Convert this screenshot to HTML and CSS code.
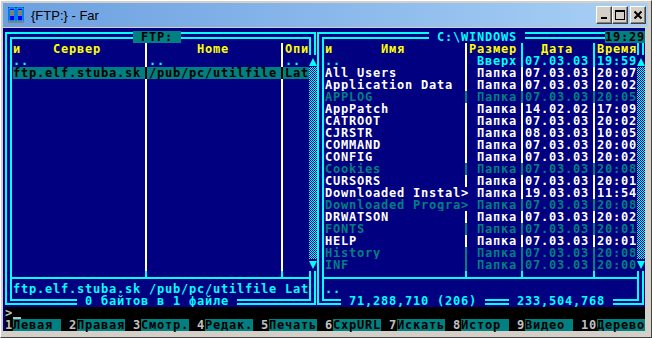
FILE: index.html
```html
<!DOCTYPE html>
<html lang="ru">
<head>
    <meta charset="UTF-8">
    <title>{FTP:} - Far</title>
    <link rel="stylesheet" href="styles.css">
</head>
<body>
<div class="window">
    <div class="titlebar">
        <svg class="app-icon" width="16" height="16" viewBox="0 0 16 16">
            <rect x="0" y="0" width="16" height="16" fill="#0000a8"/>
            <rect x="1" y="1" width="6" height="13" fill="#0000ff" stroke="#00ffff" stroke-width="1"/>
            <rect x="9" y="1" width="6" height="13" fill="#0000ff" stroke="#00ffff" stroke-width="1"/>
            <path d="M2 4h4M2 6h4M2 8h4M10 4h4M10 6h4M10 8h4" stroke="#ffff00" stroke-width="1"/>
            <rect x="0" y="14" width="16" height="2" fill="#808080"/>
        </svg>
        <span class="title">{FTP:} - Far</span>
        <div class="buttons">
            <span class="btn">
                <svg width="10" height="10" viewBox="0 0 10 10"><rect x="2" y="7" width="6" height="2" fill="#000"/></svg>
            </span>
            <span class="btn">
                <svg width="10" height="10" viewBox="0 0 10 10"><rect x="0.5" y="0.5" width="9" height="9" fill="none" stroke="#000"/><rect x="0" y="0" width="10" height="2" fill="#000"/></svg>
            </span>
            <span class="btn btn-close">
                <svg width="10" height="10" viewBox="0 0 10 10"><path d="M1.5 1.5L8.5 8.5M8.5 1.5L1.5 8.5" stroke="#000" stroke-width="2"/></svg>
            </span>
        </div>
    </div>

    <div class="console">
        <div class="panels">
            <!-- левая панель -->
            <div class="panel panel-left">
                <div class="row">
                    <i class="g tl"></i><i class="h2 c15"></i><span class="ptitle active"> FTP: </span><i class="h2 c16"></i><i class="g tr"></i>
                </div>
                <div class="row hd">
                    <i class="g v2"></i><span class="c16">и    Сервер     </span><i class="g v1 sepw"></i><span class="c16">      Home      </span><i class="g v1 sepw"></i><span class="c3">Опи</span><i class="g v2"></i>
                </div>
                <div class="row up">
                    <i class="g v2"></i><span class="c16">..</span><i class="g v1 sepw"></i><span class="c16">..</span><i class="g v1 sepw"></i><span class="c3">..</span><i class="g sb-up"></i>
                </div>
                <div class="row">
                    <i class="g v2"></i><span class="cursor-bar"><span class="c16">ftp.elf.stuba.sk</span><i class="g v1"></i><span class="c16">/pub/pc/utilfile</span><i class="g v1"></i><span class="c3">Lat</span></span><i class="g sb"></i>
                </div>
                <div class="row"><i class="g v2"></i><span class="c16"></span><i class="g v1 sepw"></i><span class="c16"></span><i class="g v1 sepw"></i><span class="c3"></span><i class="g sb"></i></div>
                <div class="row"><i class="g v2"></i><span class="c16"></span><i class="g v1 sepw"></i><span class="c16"></span><i class="g v1 sepw"></i><span class="c3"></span><i class="g sb"></i></div>
                <div class="row"><i class="g v2"></i><span class="c16"></span><i class="g v1 sepw"></i><span class="c16"></span><i class="g v1 sepw"></i><span class="c3"></span><i class="g sb"></i></div>
                <div class="row"><i class="g v2"></i><span class="c16"></span><i class="g v1 sepw"></i><span class="c16"></span><i class="g v1 sepw"></i><span class="c3"></span><i class="g sb"></i></div>
                <div class="row"><i class="g v2"></i><span class="c16"></span><i class="g v1 sepw"></i><span class="c16"></span><i class="g v1 sepw"></i><span class="c3"></span><i class="g sb"></i></div>
                <div class="row"><i class="g v2"></i><span class="c16"></span><i class="g v1 sepw"></i><span class="c16"></span><i class="g v1 sepw"></i><span class="c3"></span><i class="g sb"></i></div>
                <div class="row"><i class="g v2"></i><span class="c16"></span><i class="g v1 sepw"></i><span class="c16"></span><i class="g v1 sepw"></i><span class="c3"></span><i class="g sb"></i></div>
                <div class="row"><i class="g v2"></i><span class="c16"></span><i class="g v1 sepw"></i><span class="c16"></span><i class="g v1 sepw"></i><span class="c3"></span><i class="g sb"></i></div>
                <div class="row"><i class="g v2"></i><span class="c16"></span><i class="g v1 sepw"></i><span class="c16"></span><i class="g v1 sepw"></i><span class="c3"></span><i class="g sb"></i></div>
                <div class="row"><i class="g v2"></i><span class="c16"></span><i class="g v1 sepw"></i><span class="c16"></span><i class="g v1 sepw"></i><span class="c3"></span><i class="g sb"></i></div>
                <div class="row"><i class="g v2"></i><span class="c16"></span><i class="g v1 sepw"></i><span class="c16"></span><i class="g v1 sepw"></i><span class="c3"></span><i class="g sb"></i></div>
                <div class="row"><i class="g v2"></i><span class="c16"></span><i class="g v1 sepw"></i><span class="c16"></span><i class="g v1 sepw"></i><span class="c3"></span><i class="g sb"></i></div>
                <div class="row"><i class="g v2"></i><span class="c16"></span><i class="g v1 sepw"></i><span class="c16"></span><i class="g v1 sepw"></i><span class="c3"></span><i class="g sb"></i></div>
                <div class="row"><i class="g v2"></i><span class="c16"></span><i class="g v1 sepw"></i><span class="c16"></span><i class="g v1 sepw"></i><span class="c3"></span><i class="g sb"></i></div>
                <div class="row"><i class="g v2"></i><span class="c16"></span><i class="g v1 sepw"></i><span class="c16"></span><i class="g v1 sepw"></i><span class="c3"></span><i class="g sb"></i></div>
                <div class="row"><i class="g v2"></i><span class="c16"></span><i class="g v1 sepw"></i><span class="c16"></span><i class="g v1 sepw"></i><span class="c3"></span><i class="g sb-down"></i></div>
                <div class="row">
                    <i class="g lj"></i><i class="h1 c16"></i><i class="g bj"></i><i class="h1 c16"></i><i class="g bj"></i><i class="h1 c3"></i><i class="g rj"></i>
                </div>
                <div class="row info">
                    <i class="g v2"></i><span class="c37">ftp.elf.stuba.sk /pub/pc/utilfile Lat</span><i class="g v2"></i>
                </div>
                <div class="row status">
                    <i class="g bl"></i><i class="h2b c8"></i><span class="c20"> 0 байтов в 1 файле </span><i class="h2b c9"></i><i class="g br"></i>
                </div>
            </div>

            <!-- правая панель -->
            <div class="panel panel-right">
                <div class="row">
                    <i class="g tl"></i><i class="h2 c13"></i><span class="ptitle"> C:\WINDOWS </span><i class="h2 c10"></i><span class="clock">19:29</span>
                </div>
                <div class="row hd">
                    <i class="g v2"></i><span class="c17">и      Имя       </span><i class="g v1 sepw"></i><span class="c6">Размер</span><i class="g v1 sepc"></i><span class="c8">  Дата  </span><i class="g v1 sepc"></i><span class="c5">Время</span><i class="g v2"></i>
                </div>
                <div class="row f-up">
                    <i class="g v2"></i><span class="c17">..</span><i class="g v1 sepw"></i><span class="c6"> Вверх</span><i class="g v1"></i><span class="c8">07.03.03</span><i class="g v1"></i><span class="c5">19:59</span><i class="g sb-up"></i>
                </div>
                <div class="row f-dir">
                    <i class="g v2"></i><span class="c17">All Users</span><i class="g v1"></i><span class="c6"> Папка</span><i class="g v1"></i><span class="c8">07.03.03</span><i class="g v1"></i><span class="c5">20:07</span><i class="g sb"></i>
                </div>
                <div class="row f-dir">
                    <i class="g v2"></i><span class="c17">Application Data</span><i class="g v1"></i><span class="c6"> Папка</span><i class="g v1"></i><span class="c8">07.03.03</span><i class="g v1"></i><span class="c5">20:02</span><i class="g sb"></i>
                </div>
                <div class="row f-hid">
                    <i class="g v2"></i><span class="c17">APPLOG</span><i class="g v1"></i><span class="c6"> Папка</span><i class="g v1"></i><span class="c8">07.03.03</span><i class="g v1"></i><span class="c5">20:05</span><i class="g sb"></i>
                </div>
                <div class="row f-dir">
                    <i class="g v2"></i><span class="c17">AppPatch</span><i class="g v1"></i><span class="c6"> Папка</span><i class="g v1"></i><span class="c8">14.02.02</span><i class="g v1"></i><span class="c5">17:09</span><i class="g sb"></i>
                </div>
                <div class="row f-dir">
                    <i class="g v2"></i><span class="c17">CATROOT</span><i class="g v1"></i><span class="c6"> Папка</span><i class="g v1"></i><span class="c8">07.03.03</span><i class="g v1"></i><span class="c5">20:02</span><i class="g sb"></i>
                </div>
                <div class="row f-dir">
                    <i class="g v2"></i><span class="c17">CJRSTR</span><i class="g v1"></i><span class="c6"> Папка</span><i class="g v1"></i><span class="c8">08.03.03</span><i class="g v1"></i><span class="c5">10:05</span><i class="g sb"></i>
                </div>
                <div class="row f-dir">
                    <i class="g v2"></i><span class="c17">COMMAND</span><i class="g v1"></i><span class="c6"> Папка</span><i class="g v1"></i><span class="c8">07.03.03</span><i class="g v1"></i><span class="c5">20:00</span><i class="g sb"></i>
                </div>
                <div class="row f-dir">
                    <i class="g v2"></i><span class="c17">CONFIG</span><i class="g v1"></i><span class="c6"> Папка</span><i class="g v1"></i><span class="c8">07.03.03</span><i class="g v1"></i><span class="c5">20:02</span><i class="g sb"></i>
                </div>
                <div class="row f-hid">
                    <i class="g v2"></i><span class="c17">Cookies</span><i class="g v1"></i><span class="c6"> Папка</span><i class="g v1"></i><span class="c8">07.03.03</span><i class="g v1"></i><span class="c5">20:08</span><i class="g sb"></i>
                </div>
                <div class="row f-dir">
                    <i class="g v2"></i><span class="c17">CURSORS</span><i class="g v1"></i><span class="c6"> Папка</span><i class="g v1"></i><span class="c8">07.03.03</span><i class="g v1"></i><span class="c5">20:01</span><i class="g sb"></i>
                </div>
                <div class="row f-dir">
                    <i class="g v2"></i><span class="c18">Downloaded Instal&gt;</span><span class="c6"> Папка</span><i class="g v1"></i><span class="c8">19.03.03</span><i class="g v1"></i><span class="c5">11:54</span><i class="g sb"></i>
                </div>
                <div class="row f-hid">
                    <i class="g v2"></i><span class="c18">Downloaded Progra&gt;</span><span class="c6"> Папка</span><i class="g v1"></i><span class="c8">07.03.03</span><i class="g v1"></i><span class="c5">20:08</span><i class="g sb"></i>
                </div>
                <div class="row f-dir">
                    <i class="g v2"></i><span class="c17">DRWATSON</span><i class="g v1"></i><span class="c6"> Папка</span><i class="g v1"></i><span class="c8">07.03.03</span><i class="g v1"></i><span class="c5">20:02</span><i class="g sb"></i>
                </div>
                <div class="row f-hid">
                    <i class="g v2"></i><span class="c17">FONTS</span><i class="g v1"></i><span class="c6"> Папка</span><i class="g v1"></i><span class="c8">07.03.03</span><i class="g v1"></i><span class="c5">20:01</span><i class="g sb"></i>
                </div>
                <div class="row f-dir">
                    <i class="g v2"></i><span class="c17">HELP</span><i class="g v1"></i><span class="c6"> Папка</span><i class="g v1"></i><span class="c8">07.03.03</span><i class="g v1"></i><span class="c5">20:01</span><i class="g sb"></i>
                </div>
                <div class="row f-hid">
                    <i class="g v2"></i><span class="c17">History</span><i class="g v1"></i><span class="c6"> Папка</span><i class="g v1"></i><span class="c8">07.03.03</span><i class="g v1"></i><span class="c5">20:08</span><i class="g sb"></i>
                </div>
                <div class="row f-hid">
                    <i class="g v2"></i><span class="c17">INF</span><i class="g v1"></i><span class="c6"> Папка</span><i class="g v1"></i><span class="c8">07.03.03</span><i class="g v1"></i><span class="c5">20:00</span><i class="g sb-down"></i>
                </div>
                <div class="row">
                    <i class="g lj"></i><i class="h1 c17"></i><i class="g bj"></i><i class="h1 c6"></i><i class="g bj"></i><i class="h1 c8"></i><i class="g bj"></i><i class="h1 c5"></i><i class="g rj"></i>
                </div>
                <div class="row info">
                    <i class="g v2"></i><span class="c39">..</span><i class="g v2"></i>
                </div>
                <div class="row status">
                    <i class="g bl"></i><i class="h2b c2"></i><span class="c18"> 71,288,710 (206) </span><i class="h2b c3"></i><span class="c13"> 233,504,768 </span><i class="h2b c3"></i><i class="g br"></i>
                </div>
            </div>
        </div>

        <div class="cmdline"><span class="prompt">&gt;</span><span class="caret"></span></div>

        <div class="keybar">
            <span class="key"><b>1</b><span>Левая </span></span>
            <span class="key"><b>2</b><span>Правая</span></span>
            <span class="key"><b>3</b><span>Смотр.</span></span>
            <span class="key"><b>4</b><span>Редак.</span></span>
            <span class="key"><b>5</b><span>Печать</span></span>
            <span class="key"><b>6</b><span>СхрURL</span></span>
            <span class="key"><b>7</b><span>Искать</span></span>
            <span class="key"><b>8</b><span>Истор </span></span>
            <span class="key"><b>9</b><span>Видео </span></span>
            <span class="key key-last"><b>10</b><span>Дерево</span></span>
        </div>
    </div>
</div>
</body>
</html>
```

FILE: styles.css
```css
body {
    margin: 0;
    padding: 0;
    background-color: #d4d0c8;
}
.window {
    width: 652px;
    height: 338px;
    box-sizing: border-box;
    padding: 2px 3px 0 2px;
    background-color: #d4d0c8;
    border-top: 1px solid #ffffff;
    border-left: 1px solid #ffffff;
    border-right: 1px solid #404040;
    border-bottom: 1px solid #404040;
}
.titlebar {
    height: 24px;
    display: flex;
    align-items: center;
    padding-left: 5px;
    background-image: linear-gradient(to right, #6b9fe0, #a9d0f5);
    font-family: "Liberation Sans", Arial, sans-serif;
    font-size: 13px;
    color: #000000;
}
.app-icon {
    flex: none;
    margin-right: 7px;
}
.title {
    flex: 1;
}
.buttons {
    display: flex;
    padding-right: 2px;
}
.btn {
    width: 16px;
    height: 18px;
    box-sizing: border-box;
    background-color: #d4d0c8;
    border: 1px solid;
    border-color: #ffffff #404040 #404040 #ffffff;
    box-shadow: inset -1px -1px 0 #808080;
    display: flex;
    align-items: center;
    justify-content: center;
}
.btn-close {
    margin-left: 2px;
}

/* консоль 80x25, ячейка 8x12 */
.console {
    width: 642px;
    padding: 3px 0 0 2px;
    margin-top: 1px;
    box-sizing: border-box;
    background-color: #000080;
    font-family: "DejaVu Sans Mono", monospace;
    font-weight: bold;
    font-size: 12px;
    letter-spacing: 0.775px;
    line-height: 12px;
    color: #00ffff;
}
.console span, .console b {
    white-space: pre;
}
.panels {
    display: flex;
}
.panel-left {
    width: 312px;
}
.panel-right {
    width: 328px;
}
.row {
    display: flex;
    height: 12px;
}
.row > span, .cursor-bar > span {
    overflow: hidden;
}

.c2 { width: 16px; flex: none; }
.c3 { width: 24px; flex: none; }
.c5 { width: 40px; flex: none; }
.c6 { width: 48px; flex: none; }
.c8 { width: 64px; flex: none; }
.c9 { width: 72px; flex: none; }
.c10 { width: 80px; flex: none; }
.c13 { width: 104px; flex: none; }
.c15 { width: 120px; flex: none; }
.c16 { width: 128px; flex: none; }
.c17 { width: 136px; flex: none; }
.c18 { width: 144px; flex: none; }
.c20 { width: 160px; flex: none; }
.c37 { width: 296px; flex: none; }
.c39 { width: 312px; flex: none; }

/* псевдографика рамок */
.g {
    display: block;
    width: 8px;
    height: 12px;
    flex: none;
    background-repeat: no-repeat;
}
.h2, .h2b, .h1 {
    display: block;
    height: 12px;
    background-repeat: no-repeat;
}
.h2 {
    background-image: linear-gradient(#00ffff, #00ffff), linear-gradient(#00ffff, #00ffff);
    background-size: 100% 2px, 100% 2px;
    background-position: 0 1px, 0 6px;
}
.h2b {
    background-image: linear-gradient(#00ffff, #00ffff), linear-gradient(#00ffff, #00ffff);
    background-size: 100% 2px, 100% 2px;
    background-position: 0 4px, 0 8px;
}
.h1 {
    background-image: linear-gradient(#00ffff, #00ffff);
    background-size: 100% 2px;
    background-position: 0 6px;
}
.v2 {
    background-image: linear-gradient(#00ffff, #00ffff), linear-gradient(#00ffff, #00ffff);
    background-size: 2px 100%, 2px 100%;
    background-position: 0 0, 5px 0;
}
.v1 {
    background-image: linear-gradient(currentColor, currentColor);
    background-size: 2px 100%;
    background-position: 4px 0;
}
.sepw {
    color: #ffffff;
}
.sepc {
    color: #00ffff;
}
.tl {
    background-image: linear-gradient(#00ffff, #00ffff), linear-gradient(#00ffff, #00ffff),
        linear-gradient(#00ffff, #00ffff), linear-gradient(#00ffff, #00ffff);
    background-size: 8px 2px, 2px 11px, 3px 2px, 2px 6px;
    background-position: 0 1px, 0 1px, 5px 6px, 5px 6px;
}
.tr {
    background-image: linear-gradient(#00ffff, #00ffff), linear-gradient(#00ffff, #00ffff),
        linear-gradient(#00ffff, #00ffff), linear-gradient(#00ffff, #00ffff);
    background-size: 7px 2px, 2px 11px, 2px 2px, 2px 6px;
    background-position: 0 1px, 5px 1px, 0 6px, 0 6px;
}
.bl {
    background-image: linear-gradient(#00ffff, #00ffff), linear-gradient(#00ffff, #00ffff),
        linear-gradient(#00ffff, #00ffff), linear-gradient(#00ffff, #00ffff);
    background-size: 8px 2px, 2px 10px, 3px 2px, 2px 6px;
    background-position: 0 8px, 0 0, 5px 4px, 5px 0;
}
.br {
    background-image: linear-gradient(#00ffff, #00ffff), linear-gradient(#00ffff, #00ffff),
        linear-gradient(#00ffff, #00ffff), linear-gradient(#00ffff, #00ffff);
    background-size: 7px 2px, 2px 10px, 2px 2px, 2px 6px;
    background-position: 0 8px, 5px 0, 0 4px, 0 0;
}
.lj {
    background-image: linear-gradient(#00ffff, #00ffff), linear-gradient(#00ffff, #00ffff),
        linear-gradient(#00ffff, #00ffff);
    background-size: 2px 12px, 2px 12px, 3px 2px;
    background-position: 0 0, 5px 0, 5px 6px;
}
.rj {
    background-image: linear-gradient(#00ffff, #00ffff), linear-gradient(#00ffff, #00ffff),
        linear-gradient(#00ffff, #00ffff);
    background-size: 2px 12px, 2px 12px, 2px 2px;
    background-position: 0 0, 5px 0, 0 6px;
}
.bj {
    background-image: linear-gradient(#00ffff, #00ffff), linear-gradient(#00ffff, #00ffff);
    background-size: 8px 2px, 2px 7px;
    background-position: 0 6px, 4px 0;
}

/* полоса прокрутки */
.sb {
    background: repeating-conic-gradient(#00ffff 0 25%, #000080 0 50%) 0 0 / 2px 2px;
}
.sb-up, .sb-down {
    background-color: #00ffff;
}
.sb-up {
    clip-path: polygon(4px 3px, 8px 11px, 0 11px);
}
.sb-down {
    clip-path: polygon(0 2px, 8px 2px, 4px 10px);
}

.ptitle {
    flex: none;
    color: #00ffff;
}
.ptitle.active {
    background-color: #008080;
    color: #000000;
}
.clock {
    width: 40px;
    flex: none;
    background-color: #008080;
    color: #000000;
}
.hd {
    color: #ffff00;
}
.up {
    color: #00ffff;
}
.cursor-bar {
    display: flex;
    background-color: #008080;
    color: #000000;
}
.f-up {
    color: #00ffff;
}
.f-dir {
    color: #ffffff;
}
.f-hid {
    color: #008080;
}
.info, .status {
    color: #00ffff;
}

.cmdline {
    height: 12px;
    display: flex;
    background-color: #000000;
    color: #c0c0c0;
}
.prompt {
    width: 8px;
}
.caret {
    width: 8px;
    height: 2px;
    margin-top: 10px;
    background-color: #c0c0c0;
}
.keybar {
    height: 12px;
    display: flex;
    background-color: #000000;
}
.key {
    display: flex;
    width: 64px;
    flex: none;
}
.key b {
    width: 8px;
    color: #c0c0c0;
}
.key span {
    width: 48px;
    background-color: #008080;
    color: #000000;
}
.key-last b {
    width: 16px;
}
```
